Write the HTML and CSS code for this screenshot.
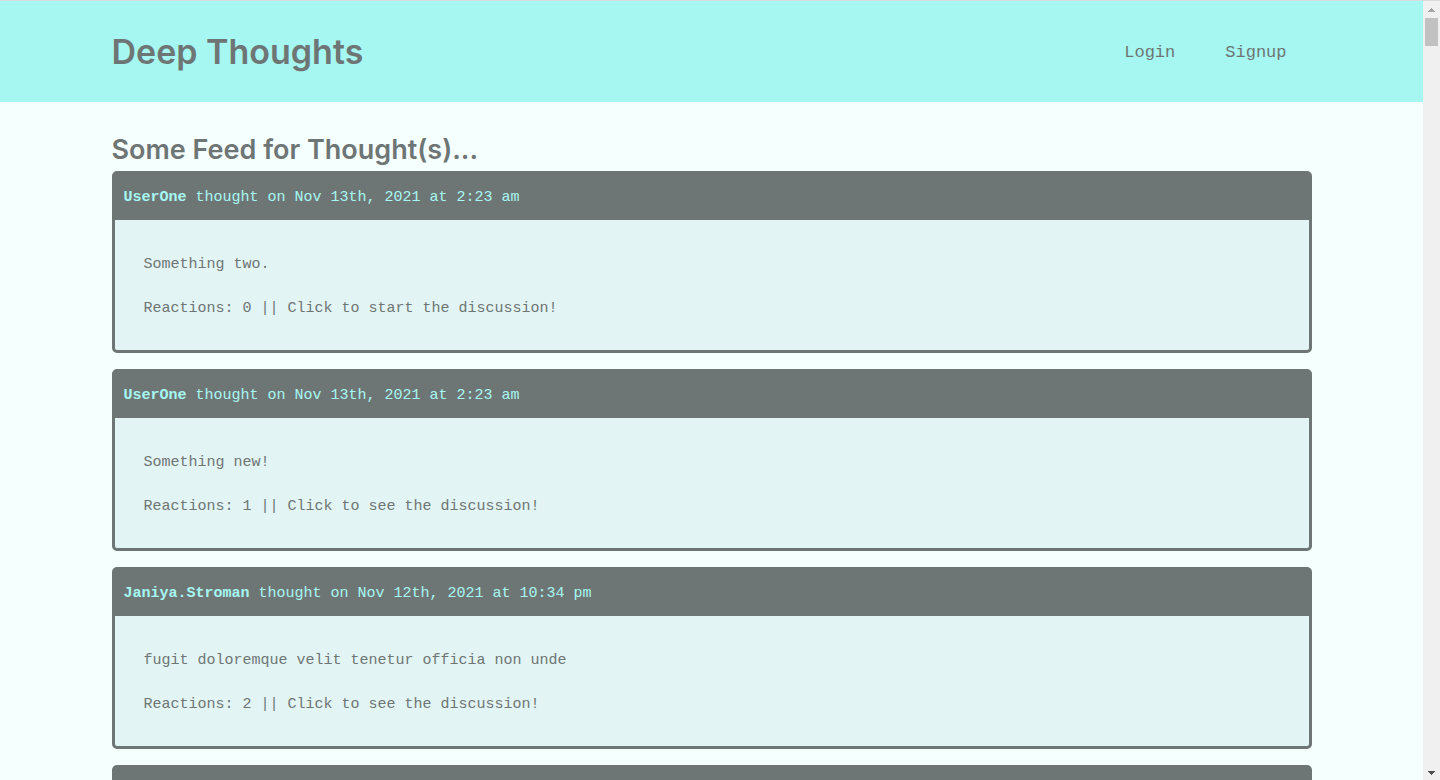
FILE: index.html
```html
<!DOCTYPE html>
<html lang="en">
<head>
<meta charset="utf-8">
<meta name="viewport" content="width=device-width, initial-scale=1">
<title>Deep Thoughts</title>
<link rel="stylesheet" href="styles.css">
</head>
<body>
<div class="viewport">
  <div class="page">
    <header class="site-header">
      <div class="container site-header-row">
        <h1 class="brand"><a href="#">Deep Thoughts</a></h1>
        <nav class="site-nav">
          <a href="#login">Login</a>
          <a href="#signup">Signup</a>
        </nav>
      </div>
    </header>
    <main class="container feed">
      <h2 class="feed-title">Some Feed for Thought(s)...</h2>
      <article class="card">
        <p class="card-header"><a href="#user"><b>UserOne</b></a> thought on Nov 13th, 2021 at 2:23 am</p>
        <a class="card-body" href="#thought">
          <p>Something two.</p>
          <p>Reactions: 0 || Click to start the discussion!</p>
        </a>
      </article>
      <article class="card">
        <p class="card-header"><a href="#user"><b>UserOne</b></a> thought on Nov 13th, 2021 at 2:23 am</p>
        <a class="card-body" href="#thought">
          <p>Something new!</p>
          <p>Reactions: 1 || Click to see the discussion!</p>
        </a>
      </article>
      <article class="card">
        <p class="card-header"><a href="#user"><b>Janiya.Stroman</b></a> thought on Nov 12th, 2021 at 10:34 pm</p>
        <a class="card-body" href="#thought">
          <p>fugit doloremque velit tenetur officia non unde</p>
          <p>Reactions: 2 || Click to see the discussion!</p>
        </a>
      </article>
      <article class="card">
        <p class="card-header"></p>
      </article>
    </main>
  </div>
  <div class="scrollbar" aria-hidden="true">
    <svg class="arrow" viewBox="0 0 17 16" shape-rendering="crispEdges"><path fill="#a3a3a3" d="M8 7h1v1h1v1h1v1h1v1H5v-1h1V9h1V8h1z"/></svg>
    <div class="track"><div class="thumb"></div></div>
    <svg class="arrow" viewBox="0 0 17 16" shape-rendering="crispEdges"><path fill="#505050" d="M5 7h7v1h-1v1h-1v1H9v1H8v-1H7V9H6V8H5z"/></svg>
  </div>
</div>
</body>
</html>
```
FILE: styles.css
```css
:root {
  --primary: #a6f7f1;
  --dark: #6e7675;
  --light: #f5fffe;
  --surface: #e2f4f4;
}

* {
  box-sizing: border-box;
}

body {
  margin: 0;
  background: var(--light);
  color: var(--dark);
  font-family: "Liberation Mono", monospace;
  font-size: 15px;
  line-height: 22px;
}

h1, h2, p {
  margin: 0;
}

a {
  color: inherit;
  text-decoration: none;
}

.viewport {
  display: flex;
  height: 100vh;
  border-top: 1px solid #d9dcdc;
  overflow: hidden;
}

.page {
  flex: 1;
  overflow: hidden;
}

.container {
  width: 100%;
  max-width: 1200px;
  margin: 0 auto;
}

.site-header {
  padding: 24px 0;
  background: var(--primary);
}

.site-header-row {
  display: flex;
  align-items: center;
  justify-content: space-between;
}

.brand {
  font-family: Inter, sans-serif;
  font-size: 34px;
  font-weight: 600;
  line-height: 53px;
}

.site-nav {
  display: flex;
  gap: 50px;
  padding: 2px 25px 0 0;
  font-size: 17px;
}

.feed {
  padding-top: 32px;
}

.feed-title {
  font-family: Inter, sans-serif;
  font-size: 27px;
  font-weight: 600;
  line-height: 32px;
  margin-bottom: 5px;
}

.card {
  margin-bottom: 16px;
  border: 3px solid var(--dark);
  border-radius: 5px;
  background: var(--surface);
}

.card-header {
  min-height: 46px;
  padding: 13px 9px 11px;
  background: var(--dark);
  color: var(--primary);
}

.card-body {
  display: grid;
  gap: 22px;
  padding: 34px 29px 30px;
}

.scrollbar {
  display: flex;
  flex-direction: column;
  width: 17px;
  background: #f0f0f0;
}

.arrow {
  width: 17px;
  height: 16px;
}

.track {
  flex: 1;
  padding: 1px 2px;
}

.thumb {
  height: 28px;
  background: #c1c1c1;
}
```
